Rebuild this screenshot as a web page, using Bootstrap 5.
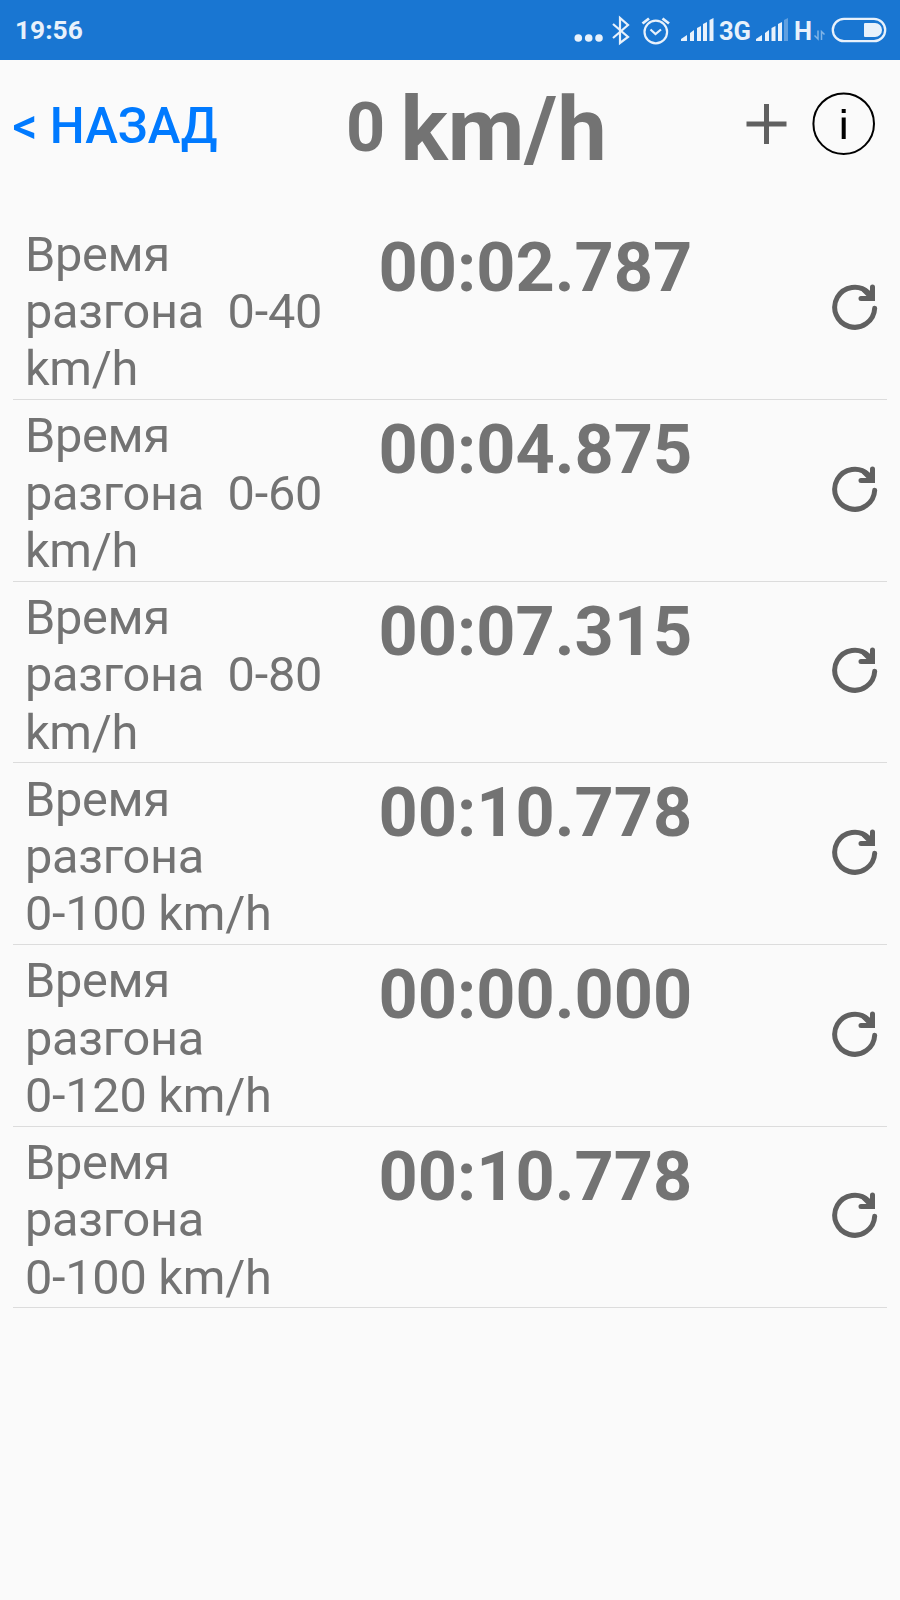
<!DOCTYPE html>
<html lang="ru">
<head>
<meta charset="utf-8">
<meta name="viewport" content="width=device-width, initial-scale=1">
<title>Время разгона</title>
<link href="https://cdn.jsdelivr.net/npm/bootstrap@5.3.0/dist/css/bootstrap.min.css" rel="stylesheet">
<style>
body{font-family:Roboto,sans-serif;background:#fafafa;color:#737373;min-height:1600px}
svg{display:block;flex:none}
.status{height:60px;background:#1976d2;color:#e8f1fb;font-size:26.3px;font-weight:700;line-height:61px;padding:0 10px 0 15px}
.net{font-size:25.5px;line-height:62px;flex:none;text-align:center}
.topbar{height:158.4px;padding-left:12.6px}
.back{color:#007aff;font-size:49.2px;font-weight:500;line-height:58px;width:333.4px;padding-top:37.4px;white-space:nowrap}
.speed{width:400px;font-weight:700;white-space:nowrap}
.speed-value{font-size:68.4px;line-height:80px;padding-top:27.7px;width:54.4px}
.speed-unit{font-size:88.5px;line-height:104px;padding-top:17.5px}
.runs{margin:0 13px 0 12.7px}
.run{height:181.67px;border-bottom:1px solid #dcdcdc;padding:7.4px 0 0 12.2px}
.run-label{font-size:48.7px;letter-spacing:-.25px;line-height:57.3px;width:353.6px;white-space:nowrap}
.run-time{font-size:68.4px;line-height:80px;font-weight:700;padding-top:2.7px}
.reset{margin:57.2px 7px 0 auto}
</style>
</head>
<body>
<header class="status d-flex">
  <span>19:56</span>
  <svg class="ms-auto" width="147" height="60" viewBox="570 0 147 60" fill="none" stroke="#e8f1fb" stroke-width="2.2">
    <g fill="#e8f1fb" stroke="none"><circle cx="578.3" cy="38" r="3.8"/><circle cx="588.7" cy="38" r="3.8"/><circle cx="599" cy="38" r="3.8"/></g>
    <path d="M613 24 628 37 620 43V18L628 25 613 38"/>
    <circle cx="655.8" cy="32" r="11.3"/><path d="M650.5 29.5 655.5 34 661 29.5"/><path d="M642.5 23.500 649 18.500M662.500 18.500 669 23.500" stroke-width="2.800"/>
    <path fill="#e8f1fb" stroke="none" d="M681 41v-2l6-4v6zM690 41v-8l4-3v11zM697 41V28l4-2v15zM703 41V24l4-2v19zM709.500 41V20l4-2v23z"/>
  </svg>
  <span class="net" style="width:36px">3G</span>
  <svg width="39" height="60" viewBox="753 0 39 60" fill="#e8f1fb">
    <path d="M756 41v-2l6-4v6zM765 41v-8l4-3v11zM771.500 41V28l4-2v15zM778 41V24l4-2v19z"/><path opacity=".35" d="M784 41V20l4-2v23z"/>
  </svg>
  <span class="net" style="width:22px">H</span>
  <svg width="76" height="60" viewBox="814 0 76 60" fill="none" stroke="#e8f1fb">
    <path d="M818 30.500V39L814.500 35.500M821.500 40V31.500L824.500 34.500" stroke-width="1.500" opacity=".5"/>
    <rect x="832.800" y="18.800" width="52.400" height="22.400" rx="11.200" stroke-width="2.300"/>
    <path fill="#e8f1fb" stroke="none" d="M865 23h10a7 7 0 0 1 0 14h-10a1 1 0 0 1-1-1V24a1 1 0 0 1 1-1z"/>
  </svg>
</header>
<nav class="topbar d-flex">
  <a class="back text-decoration-none" href="#">&lt; НАЗАД</a>
  <div class="speed d-flex align-items-start"><span class="speed-value">0</span><span class="speed-unit">km/h</span></div>
  <svg width="140" height="118" viewBox="746 60 140 118" fill="none">
    <path d="M746.500 124h40M766.500 104v40" stroke="#606060" stroke-width="5"/>
    <circle cx="843.700" cy="123.700" r="30.300" stroke="#000" stroke-width="2"/>
    <path d="M843.700 117.500v21.500M843.700 109v4" stroke="#000" stroke-width="4"/>
  </svg>
</nav>
<svg width="0" height="0" class="position-absolute" aria-hidden="true">
  <symbol id="reload" viewBox="830 282 50 50">
    <path d="M874.700 307.200a20 20 0 1 1-6.200-15.400" fill="none" stroke="#606060" stroke-width="5" stroke-linecap="round"/>
    <path d="M872.500 286v11.500H861M864 289l8 8" fill="none" stroke="#606060" stroke-width="5" stroke-linecap="round"/>
    <path d="M867 292h8v8h-8z" fill="#606060"/>
  </symbol>
</svg>
<main class="runs">
  <div class="run d-flex"><div class="run-label">Время<br>разгона&nbsp; 0-40<br>km/h</div><div class="run-time">00:02.787</div><svg class="reset" width="50" height="50"><use href="#reload"/></svg></div>
  <div class="run d-flex"><div class="run-label">Время<br>разгона&nbsp; 0-60<br>km/h</div><div class="run-time">00:04.875</div><svg class="reset" width="50" height="50"><use href="#reload"/></svg></div>
  <div class="run d-flex"><div class="run-label">Время<br>разгона&nbsp; 0-80<br>km/h</div><div class="run-time">00:07.315</div><svg class="reset" width="50" height="50"><use href="#reload"/></svg></div>
  <div class="run d-flex"><div class="run-label">Время<br>разгона<br>0-100 km/h</div><div class="run-time">00:10.778</div><svg class="reset" width="50" height="50"><use href="#reload"/></svg></div>
  <div class="run d-flex"><div class="run-label">Время<br>разгона<br>0-120 km/h</div><div class="run-time">00:00.000</div><svg class="reset" width="50" height="50"><use href="#reload"/></svg></div>
  <div class="run d-flex"><div class="run-label">Время<br>разгона<br>0-100 km/h</div><div class="run-time">00:10.778</div><svg class="reset" width="50" height="50"><use href="#reload"/></svg></div>
</main>
<script src="https://cdn.jsdelivr.net/npm/bootstrap@5.3.0/dist/js/bootstrap.bundle.min.js"></script>
</body>
</html>
